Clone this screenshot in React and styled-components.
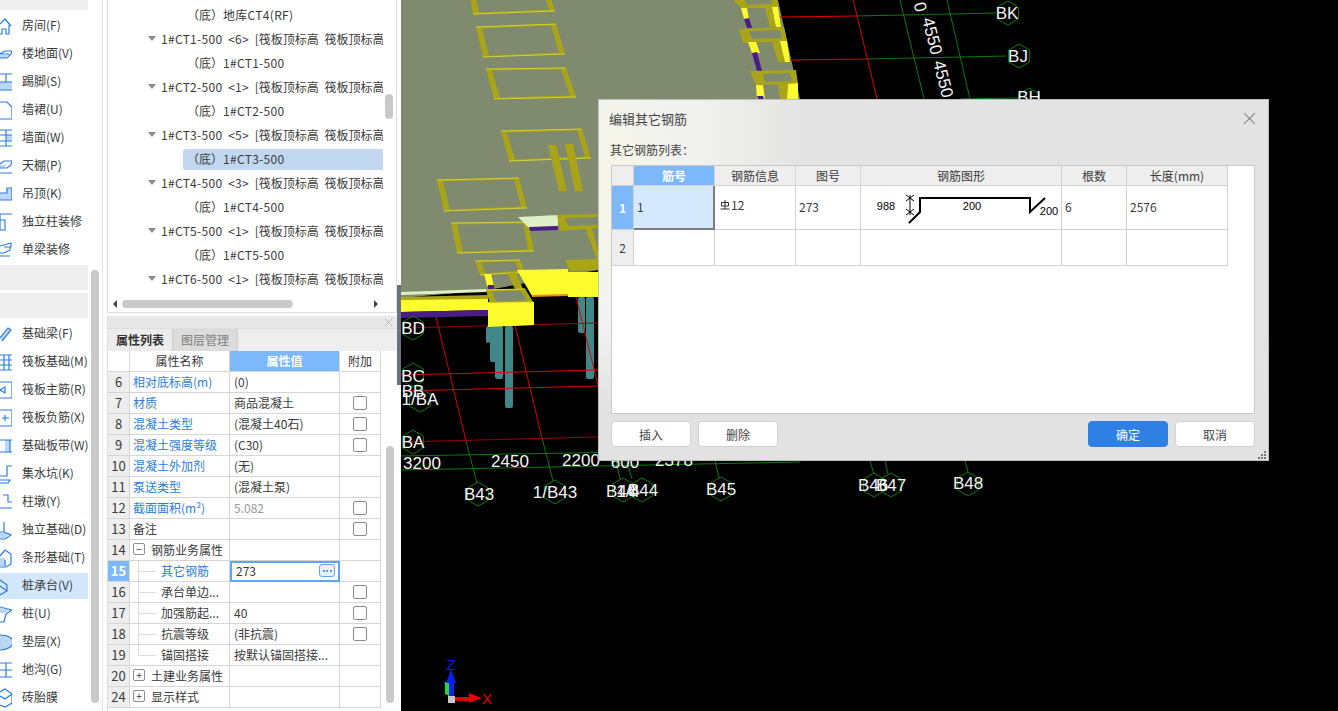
import React from "react";
import styled, { createGlobalStyle } from "styled-components";

const Global = createGlobalStyle`
  html, body { margin: 0; padding: 0; background: #fff; overflow: hidden; }
  * { box-sizing: border-box; }
  body { font-family: "Noto Sans CJK SC", "Noto Sans", sans-serif; font-size: 12px; color: #3a3a3a; }
`;

const Page = styled.div`
  position: relative;
  display: flex;
  width: 1338px;
  height: 711px;
  overflow: hidden;
  background: #fff;
`;

/* ---------- left nav ---------- */
const Sidebar = styled.aside`
  display: flex;
  width: 107px;
  flex-shrink: 0;
`;
const NavList = styled.div`
  display: flex;
  flex-direction: column;
  width: 88px;
`;
const NavBlock = styled.div`
  height: ${(p) => p.$h}px;
  margin-top: ${(p) => p.$mt}px;
  margin-bottom: ${(p) => p.$mb || 0}px;
  background: #eeeeee;
  flex-shrink: 0;
`;
const NavItem = styled.div`
  display: flex;
  align-items: center;
  flex-shrink: 0;
  height: 26px;
  margin: 1px 0;
  padding-bottom: 3px;
  background: ${(p) => (p.$active ? "#d2e6fc" : "transparent")};
  white-space: nowrap;
  overflow: hidden;
  svg { margin: 3px 10px 0 -8px; flex-shrink: 0; }
`;
const NavTrack = styled.div`
  width: 8px;
  margin: 270px 0 8px 3px;
  border-radius: 4px;
  background: #c9c9c9;
`;
const NavRule = styled.div`
  width: 1px;
  margin-left: 3px;
  background: #e4e4e4;
`;

/* ---------- middle panels ---------- */
const Column = styled.section`
  display: flex;
  flex-direction: column;
  width: 290px;
  flex-shrink: 0;
`;
const TreePanel = styled.div`
  display: flex;
  flex-direction: column;
  height: 313px;
  flex-shrink: 0;
  border: 1px solid #dcdcdc;
  border-top: 0;
`;
const TreeBody = styled.div`
  display: flex;
  flex: 1;
  min-height: 0;
`;
const TreeList = styled.div`
  width: 275px;
  padding-top: 3px;
  overflow: hidden;
`;
const TreeRow = styled.div`
  display: flex;
  align-items: center;
  height: 24px;
  padding-bottom: 1px;
  white-space: nowrap;
  padding-left: ${(p) => (p.$child ? 79 : 40)}px;
  position: relative;
  word-spacing: 3px;
  &::before {
    content: "";
    display: ${(p) => (p.$child ? "none" : "block")};
    width: 0;
    height: 0;
    margin-right: 5px;
    flex-shrink: 0;
    border-left: 4px solid transparent;
    border-right: 4px solid transparent;
    border-top: 5px solid #8a8a8a;
  }
  ${(p) =>
    p.$selected &&
    `
    &::after {
      content: "";
      position: absolute;
      left: 75px;
      right: 0;
      top: 2px;
      bottom: 1px;
      background: #c1d8f0;
      border-radius: 3px 0 0 3px;
      z-index: 0;
    }
    > span { position: relative; z-index: 1; }
  `}
`;
const Code = styled.span`
  letter-spacing: 0.3px;
`;
const VTrack = styled.div`
  width: 8px;
  margin-left: ${(p) => p.$ml}px;
  padding-top: ${(p) => p.$top}px;
`;
const VThumb = styled.div`
  height: ${(p) => p.$h}px;
  border-radius: 4px;
  background: #c9c9c9;
`;
const HBar = styled.div`
  display: flex;
  align-items: center;
  gap: 4px;
  height: 16px;
  padding-left: 5px;
`;
const HThumb = styled.div`
  width: 171px;
  height: 8px;
  margin-left: 1px;
  border-radius: 4px;
  background: #c9c9c9;
`;
const ArrowL = styled.div`
  border-top: 4px solid transparent;
  border-bottom: 4px solid transparent;
  border-right: 4px solid #444;
`;
const ArrowR = styled.div`
  margin-left: 77px;
  border-top: 4px solid transparent;
  border-bottom: 4px solid transparent;
  border-left: 4px solid #444;
`;

const PropPanel = styled.div`
  display: flex;
  flex-direction: column;
  flex: 1;
  min-height: 0;
  margin-top: 3px;
  border-left: 1px solid #dcdcdc;
`;
const PanelHead = styled.div`
  display: flex;
  justify-content: flex-end;
  align-items: center;
  height: 12px;
  padding-right: 4px;
  background: #e8e8e8;
`;
const TabBar = styled.div`
  display: flex;
  height: 23px;
  background: #eeeeee;
  border-top: 1px solid #dedede;
`;
const Tab = styled.div`
  display: flex;
  align-items: center;
  justify-content: center;
  width: 65px;
  padding-bottom: 2px;
  background: ${(p) => (p.$active ? "#ececec" : "#dcdcdc")};
  color: ${(p) => (p.$active ? "#333" : "#8d8d8d")};
  font-weight: ${(p) => (p.$active ? 700 : 500)};
  border-right: 1px solid #cfcfcf;
`;
const PropBody = styled.div`
  display: flex;
  flex: 1;
  min-height: 0;
`;
const PropTable = styled.div`
  width: 274px;
`;
const PropRow = styled.div`
  display: grid;
  grid-template-columns: 22px 100px 110px 41px;
  height: 21px;
`;
const Cell = styled.div`
  position: relative;
  display: flex;
  align-items: center;
  min-width: 0;
  padding-bottom: 2px;
  white-space: nowrap;
  overflow: hidden;
  border-right: 1px solid #d6d6d6;
  border-bottom: 1px solid #d6d6d6;
`;
const IndexCell = styled(Cell)`
  justify-content: center;
  background: ${(p) => (p.$active ? "#7db8fa" : "#eeeeee")};
  color: ${(p) => (p.$active ? "#fff" : "#3a3a3a")};
  font-size: 13px;
  font-weight: ${(p) => (p.$active ? 700 : 400)};
`;
const HeadCell = styled(Cell)`
  justify-content: center;
  background: ${(p) => (p.$active ? "#7db8fa" : "#fff")};
  color: ${(p) => (p.$active ? "#fff" : "#3a3a3a")};
  font-weight: ${(p) => (p.$active ? 700 : 400)};
`;
const NameCell = styled(Cell)`
  padding-left: ${(p) => (p.$tree ? 31 : 3)}px;
  color: ${(p) => (p.$link ? "#2a7de1" : "#3a3a3a")};
  ${(p) =>
    p.$tree &&
    `
    &::before {
      content: "";
      position: absolute;
      left: 8px;
      top: 0;
      width: 17px;
      height: 50%;
      border-left: 1px solid #ddd;
      border-bottom: 1px solid #ddd;
    }
  `}
  ${(p) =>
    p.$tree &&
    !p.$last &&
    `
    &::after {
      content: "";
      position: absolute;
      left: 8px;
      top: 50%;
      bottom: -1px;
      border-left: 1px solid #ddd;
    }
  `}
`;
const ValueCell = styled(Cell)`
  padding-left: 4px;
  color: ${(p) => (p.$muted ? "#9a9a9a" : "#3a3a3a")};
`;
const EditCell = styled(Cell)`
  justify-content: space-between;
  padding: 0 3px 2px 4px;
  border: 2px solid #5ba6f5;
`;
const DotsButton = styled.div`
  display: flex;
  align-items: center;
  justify-content: center;
  gap: 1.5px;
  width: 16px;
  height: 13px;
  border: 1px solid #5ba6f5;
  border-radius: 3px;
  background: #e6f1fd;
  i { width: 2px; height: 2px; border-radius: 50%; background: #2a7de1; }
`;
const CheckCell = styled(Cell)`
  justify-content: center;
  padding-bottom: 0;
`;
const Check = styled.div`
  width: 14px;
  height: 14px;
  border: 1px solid #8a8a8a;
  border-radius: 2px;
  background: #fff;
`;
const Expand = styled.div`
  display: flex;
  align-items: center;
  justify-content: center;
  width: 12px;
  height: 12px;
  margin-right: 6px;
  flex-shrink: 0;
  border: 1px solid #8e8e8e;
  border-radius: 2px;
  font-size: 10px;
  line-height: 1;
`;

const Splitter = styled.div`
  width: 4px;
  flex-shrink: 0;
  padding-top: 285px;
`;
const SplitHandle = styled.div`
  height: 100px;
  background: #6b7180;
`;

/* ---------- 3D view ---------- */
const Viewport = styled.main`
  flex: 1;
  background: #000;
  svg { display: block; }
`;

/* ---------- dialog ---------- */
const Dialog = styled.div`
  position: absolute;
  left: 598px;
  top: 99px;
  width: 671px;
  height: 362px;
  display: flex;
  flex-direction: column;
  padding: 0 13px 13px 12px;
  border: 1px solid #bdbdbd;
  background:
    linear-gradient(180deg, rgba(226,226,226,0) 62%, #e2e2e2 85%),
    radial-gradient(ellipse 60px 130px at 20px 90px, #f5f6e6 0%, rgba(245,246,230,0) 100%),
    linear-gradient(90deg, #f3f3f1 0%, #f0f0ee 16%, #e4e4e4 30%, #e3e3e3 100%);
`;
const DialogHead = styled.div`
  display: flex;
  align-items: center;
  justify-content: space-between;
  height: 38px;
  padding-bottom: 2px;
  margin-left: -2px;
  font-size: 13px;
  color: #444;
  svg { margin-right: -1px; }
`;
const DialogLabel = styled.div`
  height: 27px;
  padding-top: 3px;
  margin-left: -1px;
  color: #444;
`;
const GridBox = styled.div`
  flex: 1;
  min-height: 0;
  background: #fff;
  border: 1px solid #c8c8c8;
`;
const RebarRow = styled.div`
  display: grid;
  grid-template-columns: 22px 81px 81px 65px 201px 65px 101px;
  width: 616px;
  height: ${(p) => p.$h}px;
`;
const RCell = styled(Cell)`
  padding-left: 3px;
  border-color: #d2d2d2;
`;
const RHead = styled(Cell)`
  justify-content: center;
  padding-bottom: 0;
  border-color: #d2d2d2;
  background: ${(p) => (p.$active ? "#7db8fa" : "#eeeeee")};
  color: ${(p) => (p.$active ? "#fff" : "#3a3a3a")};
  font-weight: ${(p) => (p.$active ? 700 : 400)};
`;
const RSelected = styled(RCell)`
  background: #d5e9fd;
  border-right: 2px solid #7c7c7c;
  border-bottom: 2px solid #7c7c7c;
`;
const RFigure = styled(Cell)`
  padding: 0;
  border-color: #d2d2d2;
  svg { display: block; }
`;
const RInfo = styled(RCell)`
  gap: 1px;
  padding-left: 5px;
  svg { margin-top: -4px; }
  span { margin-top: -4px; }
`;
const Footer = styled.div`
  display: flex;
  align-items: center;
  gap: 7px;
  height: 26px;
  margin-top: 7px;
  flex-shrink: 0;
`;
const Btn = styled.div`
  display: flex;
  align-items: center;
  justify-content: center;
  width: 80px;
  height: 26px;
  border-radius: 4px;
  border: 1px solid ${(p) => (p.$primary ? "#2f80e4" : "#d2d2d2")};
  background: ${(p) => (p.$primary ? "#2f80e4" : "#fff")};
  color: ${(p) => (p.$primary ? "#fff" : "#444")};
`;
const Spacer = styled.div`
  flex: 1;
`;
const Grip = styled.svg`
  position: absolute;
  right: 0;
  bottom: 0;
`;

/* ---------- data ---------- */
const BLUE = "#2a7de1";
const LIGHT = "#bcd6f5";
const Ic = ({ d, fill }) => (
  <svg width="20" height="20" viewBox="0 0 20 20" fill="none" stroke={BLUE} strokeWidth="1.2">
    {fill && <path d={fill} fill={LIGHT} stroke="none" />}
    <path d={d} />
  </svg>
);
const icons = {
  house: { d: "M8 8L13 3l6 7M17 9v9h-3v-5h-4v5H8" },
  floor: { d: "M8 10l5-3h7l-1 3-4 4H8M8 10h9", fill: "M8 11h8l-3 3H8z" },
  skirt: { d: "M8 2h13v16H8M8 10h13M14 2v8", fill: "M8 10h13v8H8z" },
  apron: { d: "M8 2h7l5 5v12H8" },
  wall: { d: "M8 2h13v16H8M8 7h13M8 13h13M14 2v16", fill: "M14 7h7v6h-7z" },
  ceil: { d: "M8 8l4-3h8l-1 4-4 3H8M8 17h13", fill: "M8 9h7l-3 3H8z" },
  drop: { d: "M8 16h12V4h-5v5H8", fill: "M8 9h7V4h5v12H8z" },
  col: { d: "M8 2h13M8 2v16h5V8h-5M8 8h4" },
  beam: { d: "M8 6l11-3v4H12M12 7l6 0v3l-6 3H8M8 16h10" },
  fbeam: { d: "M8 14l8-10 3 2-9 11", fill: "M8 14l8-10 3 2-9 11z" },
  raft: { d: "M8 3h13v15H8M8 8h13M8 13h13M12 3v15M17 3v15" },
  rmain: { d: "M8 2h12v16H8M8 10l5-3v6z" },
  rneg: { d: "M8 2h12v16H8M10 10h7M13 7v6" },
  band: { d: "M8 4h13M8 16h13M18 4v12", fill: "M13 4h5v12h-5z" },
  pit: { d: "M15 2h5M15 2v10H8M8 16h10l-2 3H8" },
  pier: { d: "M11 3h5v7h5v6H8" },
  isof: { d: "M12 2v10H8M12 12l7 3-6 4H8", fill: "M8 13h10l-5 5H8z" },
  strip: { d: "M13 2l6 4v10l-5 3H8M13 2L8 8M13 12v6", fill: "M8 10h5v8H8z" },
  cap: { d: "M8 4l7 5v6l-7 4M8 10l7 5" },
  pile: { d: "M8 3l12 3-6 4-2 8H8", fill: "M8 4l11 2-6 3H8z" },
  mat: { d: "M8 3c8 0 13 3 13 7s-5 8-13 8", fill: "M8 3c8 0 13 3 13 7s-5 8-13 8z" },
  ditch: { d: "M8 3h13v14H8M8 10h13M14 3v14" },
  tire: { d: "M8 4l5-3 7 5v9l-7 4-5-2M8 8l5 3 7-5" },
};

const nav1 = [
  ["房间(F)", "house"], ["楼地面(V)", "floor"], ["踢脚(S)", "skirt"], ["墙裙(U)", "apron"],
  ["墙面(W)", "wall"], ["天棚(P)", "ceil"], ["吊顶(K)", "drop"], ["独立柱装修", "col"], ["单梁装修", "beam"],
];
const nav2 = [
  ["基础梁(F)", "fbeam"], ["筏板基础(M)", "raft"], ["筏板主筋(R)", "rmain"], ["筏板负筋(X)", "rneg"],
  ["基础板带(W)", "band"], ["集水坑(K)", "pit"], ["柱墩(Y)", "pier"], ["独立基础(D)", "isof"],
  ["条形基础(T)", "strip"], ["桩承台(V)", "cap", true], ["桩(U)", "pile"], ["垫层(X)", "mat"],
  ["地沟(G)", "ditch"], ["砖胎膜", "tire"],
];

const ROOF = "[筏板顶标高 筏板顶标高";
const tree = [
  { c: 1, t: "（底）", code: "地库CT4(RF)" },
  { code: "1#CT1-500", qty: "<6>" }, { c: 1, t: "（底）", code: "1#CT1-500" },
  { code: "1#CT2-500", qty: "<1>" }, { c: 1, t: "（底）", code: "1#CT2-500" },
  { code: "1#CT3-500", qty: "<5>" }, { c: 1, s: 1, t: "（底）", code: "1#CT3-500" },
  { code: "1#CT4-500", qty: "<3>" }, { c: 1, t: "（底）", code: "1#CT4-500" },
  { code: "1#CT5-500", qty: "<1>" }, { c: 1, t: "（底）", code: "1#CT5-500" },
  { code: "1#CT6-500", qty: "<1>" },
];

const props = [
  { n: 6, name: "相对底标高(m)", link: 1, v: "(0)" },
  { n: 7, name: "材质", link: 1, v: "商品混凝土", ck: 1 },
  { n: 8, name: "混凝土类型", link: 1, v: "(混凝土40石)", ck: 1 },
  { n: 9, name: "混凝土强度等级", link: 1, v: "(C30)", ck: 1 },
  { n: 10, name: "混凝土外加剂", link: 1, v: "(无)" },
  { n: 11, name: "泵送类型", link: 1, v: "(混凝土泵)" },
  { n: 12, name: "截面面积(m²)", link: 1, v: "5.082", muted: 1, ck: 1 },
  { n: 13, name: "备注", v: "", ck: 1 },
  { n: 14, name: "钢筋业务属性", group: "−" },
  { n: 15, name: "其它钢筋", link: 1, tree: 1, edit: "273" },
  { n: 16, name: "承台单边...", tree: 1, v: "", ck: 1 },
  { n: 17, name: "加强筋起...", tree: 1, v: "40", ck: 1 },
  { n: 18, name: "抗震等级", tree: 1, v: "(非抗震)", ck: 1 },
  { n: 19, name: "锚固搭接", tree: 1, last: 1, v: "按默认锚固搭接..." },
  { n: 20, name: "土建业务属性", group: "+" },
  { n: 24, name: "显示样式", group: "+" },
];

/* ---------- 3D drawing ---------- */
const SLAB = "#7f8a6e";
const OLIVE = "#aaa518";
const YEL = "#fdfd2e";
const PUR = "#4a1c86";
const TEAL = "#3f8788";
const RED = "#e00000";
const GRN = "#0b7a0b";

const pts = (a) => a.map((p) => p.join(",")).join(" ");
const Frame = ({ q }) => {
  const [a, b, c, d] = q;
  const inner = [
    [a[0] + 6, a[1] + 1.5],
    [b[0] - 5, b[1] + 1.5],
    [c[0] - 6, c[1] - 1.5],
    [d[0] + 6, d[1] - 1.5],
  ];
  return (
    <g>
      <polygon points={pts(q)} fill={OLIVE} />
      <polygon points={pts(inner)} fill={SLAB} />
      <line x1={a[0]} y1={a[1]} x2={b[0]} y2={b[1]} stroke="#e6e322" strokeWidth="0.8" />
      <line x1={d[0]} y1={d[1]} x2={c[0]} y2={c[1]} stroke="#e6e322" strokeWidth="0.8" />
    </g>
  );
};
const frames = [
  [[470, -4], [550, -4], [555, 11], [473, 14]],
  [[476, 27], [556, 24], [565, 54], [483, 57]],
  [[486, 69], [566, 68], [576, 97], [494, 99]],
  [[501, 131], [582, 129], [591, 158], [509, 161]],
  [[437, 180], [519, 178], [527, 208], [444, 211]],
  [[451, 223], [528, 222], [534, 251], [457, 253]],
  [[475, 261], [520, 260], [525, 272], [480, 275]],
  [[486, 290], [525, 289], [533, 302], [490, 303]],
];
const polys = [
  [OLIVE, [[733, 0], [777, 0], [779, 8], [741, 8]]],
  [SLAB, [[745, 0], [771, 0], [772, 4], [747, 5]]],
  [OLIVE, [[765, 8], [772, 8], [776, 27], [770, 27]]],
  [YEL, [[772, 7], [778, 7], [781, 27], [776, 27]]],
  [YEL, [[741, 8], [747, 8], [749, 19], [744, 19]]],
  [PUR, [[744, 19], [749, 18], [752, 28], [747, 28]]],
  [OLIVE, [[739, 29], [784, 27], [787, 41], [743, 43]]],
  [SLAB, [[749, 31], [780, 30], [782, 38], [752, 39]]],
  [OLIVE, [[772, 42], [780, 41], [785, 62], [778, 62]]],
  [YEL, [[780, 41], [787, 41], [790, 62], [785, 62]]],
  [YEL, [[748, 42], [756, 42], [760, 53], [752, 53]]],
  [PUR, [[752, 53], [757, 52], [762, 71], [757, 71]]],
  [OLIVE, [[750, 71], [796, 70], [798, 84], [756, 85]]],
  [SLAB, [[763, 74], [790, 73], [792, 81], [765, 82]]],
  [YEL, [[756, 85], [763, 85], [765, 99], [757, 99]]],
  [PUR, [[757, 96], [763, 96], [764, 99], [758, 99]]],
  [OLIVE, [[778, 84], [788, 84], [787, 99], [780, 99]]],
  [YEL, [[788, 84], [798, 83], [798, 99], [787, 99]]],
  [OLIVE, [[548, 145], [556, 145], [567, 191], [559, 191]]],
  [OLIVE, [[565, 144], [573, 144], [583, 191], [575, 191]]],
  ["#dff0c8", [[518, 217], [558, 215], [558, 226], [529, 228]]],
  [PUR, [[529, 227], [558, 226], [558, 230], [530, 231]]],
  [OLIVE, [[557, 215], [598, 214], [598, 217], [565, 218], [568, 226], [598, 225], [598, 228], [560, 231]]],
  [OLIVE, [[585, 228], [592, 228], [598, 250], [598, 262]]],
  [OLIVE, [[565, 260], [598, 259], [598, 270], [570, 271]]],
  [YEL, [[484, 274], [491, 274], [494, 286], [487, 286]]],
  [PUR, [[488, 285], [494, 285], [494, 289], [488, 289]]],
  [YEL, [[517, 270], [568, 269], [568, 295], [532, 296]]],
  ["#f58a12", [[532, 295], [568, 294], [568, 296], [532, 297]]],
  [YEL, [[568, 272], [598, 272], [598, 297], [568, 297]]],
  [OLIVE, [[507, 273], [516, 272], [523, 289], [515, 289]]],
  ["#dff0c8", [[401, 292], [486, 289], [486, 292], [401, 295]]],
  [OLIVE, [[401, 297], [488, 295], [488, 300], [401, 301]]],
  [YEL, [[401, 300], [488, 299], [488, 310], [401, 312]]],
  [PUR, [[401, 312], [488, 310], [488, 316], [401, 318]]],
  [YEL, [[488, 302], [534, 302], [534, 325], [488, 327]]],
];

const pillars = [
  [486, 326, 4, 17], [490, 326, 7, 36], [495, 326, 8, 53], [505, 326, 8, 82],
  [578, 297, 7, 36], [586, 297, 8, 82],
];
const redLines = [
  [780, 17, 857, 16], [788, 60, 867, 59], [853, -1, 877, 99],
  [436, 317, 466, 441], [515, 325, 542, 438], [576, 297, 598, 385],
  [401, 375, 598, 370], [401, 391, 598, 386],
];
const darkRed = [[401, 328, 598, 323], [401, 442, 598, 437]];
const greenLines = [
  [857, 16, 996, 13], [867, 59, 1006, 56], [900, 0, 924, 99], [947, 0, 970, 99], [960, 99, 1018, 98],
  [401, 456, 800, 449], [401, 470, 800, 462], [466, 441, 477, 483], [542, 438, 553, 481],
  [616, 461, 620, 479], [627, 461, 632, 479], [715, 461, 719, 478], [870, 461, 874, 474],
  [885, 461, 888, 474], [965, 461, 968, 472],
];
const hex = (x, y, r = 12) =>
  [0, 1, 2, 3, 4, 5]
    .map((i) => {
      const a = (Math.PI / 3) * i - Math.PI / 2;
      return `${x + r * Math.cos(a)},${y + r * Math.sin(a)}`;
    })
    .join(" ");
const hexes = [
  [1008, 13], [1019, 56], [1029, 100], [413, 328], [413, 375], [420, 400], [413, 442],
  [478, 494], [555, 492], [623, 490], [642, 490], [721, 489], [874, 485], [891, 485], [968, 484],
];
const labels = [
  ["BK", 1007, 13], ["BJ", 1018, 56], ["BH", 1029, 97], ["BD", 413, 328], ["BC", 413, 376],
  ["BB", 413, 391], ["1/BA", 420, 399], ["BA", 413, 442], ["3200", 422, 463], ["2450", 510, 461],
  ["2200", 581, 460], ["B43", 479, 494], ["1/B43", 555, 492], ["B44", 621, 491], ["1/4", 628, 491],
  ["B44", 643, 490], ["B45", 721, 489], ["B46", 873, 485], ["B47", 891, 485], ["B48", 968, 483],
  ["600", 625, 462], ["2378", 674, 460],
];
const rotLabels = [["0", 920, 7], ["4550", 932, 36], ["4550", 943, 79]];
const Lab = styled.text`
  font-family: "Liberation Sans", sans-serif;
  font-size: 17px;
  fill: #f4f4f4;
  text-anchor: middle;
  dominant-baseline: central;
`;
const AxisLabel = styled.text`
  font-family: "Liberation Sans", sans-serif;
  font-size: 15px;
  text-anchor: middle;
  dominant-baseline: central;
`;

const Scene = () => (
  <svg width="937" height="711" viewBox="401 0 937 711">
    <polygon points="401,0 733,0 778,0 800,99 800,260 598,270 488,290 401,298" fill={SLAB} />
    {pillars.map(([x, y, w, h], i) => (
      <rect key={i} x={x} y={y} width={w} height={h} rx="2" fill={TEAL} />
    ))}
    {redLines.map(([a, b, c, d], i) => (
      <line key={i} x1={a} y1={b} x2={c} y2={d} stroke={RED} strokeWidth="1" />
    ))}
    {darkRed.map(([a, b, c, d], i) => (
      <line key={i} x1={a} y1={b} x2={c} y2={d} stroke="#9a0000" strokeWidth="1" />
    ))}
    {greenLines.map(([a, b, c, d], i) => (
      <line key={i} x1={a} y1={b} x2={c} y2={d} stroke={GRN} strokeWidth="1" />
    ))}
    {frames.map((q, i) => (
      <Frame key={i} q={q} />
    ))}
    {polys.map(([f, p], i) => (
      <polygon key={i} points={pts(p)} fill={f} />
    ))}
    <Frame q={frames[7]} />
    {hexes.map(([x, y], i) => (
      <polygon key={i} points={hex(x, y)} fill="none" stroke={GRN} strokeWidth="1" />
    ))}
    {labels.map(([t, x, y], i) => (
      <Lab key={i} x={x} y={y}>
        {t}
      </Lab>
    ))}
    {rotLabels.map(([t, x, y], i) => (
      <Lab key={i} x={x} y={y} transform={`rotate(76 ${x} ${y})`}>
        {t}
      </Lab>
    ))}
    <g>
      <polygon points="445,682 449,682 450,696 445,694" fill="#22e022" />
      <line x1="445" y1="682" x2="449" y2="696" stroke="#22e022" strokeWidth="1" />
      <rect x="449" y="680" width="5" height="17" fill="#0a1ef0" />
      <polygon points="451,669 446,683 456,683" fill="#0a1ef0" />
      <rect x="448" y="696" width="7" height="7" fill="#c8c8c8" />
      <rect x="455" y="697" width="15" height="4" fill="#e80000" />
      <polygon points="469,693 482,698 469,703" fill="#e80000" />
      <AxisLabel x="451" y="664" fill="#0a1ef0">Z</AxisLabel>
      <AxisLabel x="487" y="698" fill="#e80000">X</AxisLabel>
    </g>
  </svg>
);

const Figure = () => (
  <svg width="200" height="43" viewBox="861 186 200 43">
    <g stroke="#000" strokeWidth="2" fill="none">
      <polyline points="909,223 920,212 920,198 1030,198 1030,212 1045,198" />
    </g>
    <g stroke="#000" strokeWidth="1" fill="none">
      <line x1="910" y1="195" x2="910" y2="215" />
      <line x1="906" y1="195" x2="914" y2="201" />
      <line x1="914" y1="195" x2="906" y2="201" />
      <line x1="906" y1="215" x2="914" y2="209" />
      <line x1="914" y1="215" x2="906" y2="209" />
    </g>
    <g fontFamily="Liberation Sans, sans-serif" fontSize="11" fill="#000" textAnchor="middle">
      <text x="886" y="210">988</text>
      <text x="972" y="210">200</text>
      <text x="1049" y="215">200</text>
    </g>
  </svg>
);

const RebarGlyph = () => (
  <svg width="10" height="10" viewBox="0 0 10 10" fill="none" stroke="#333" strokeWidth="1">
    <path d="M1.5 2.5h7v3.5h-7zM5 0v9M0.5 9h9" />
  </svg>
);

const Close = ({ size, color, width = 1 }) => (
  <svg width={size} height={size} viewBox="0 0 12 12" stroke={color} strokeWidth={width} fill="none">
    <path d="M1 1l10 10M11 1L1 11" />
  </svg>
);

const PropLine = ({ r }) => (
  <PropRow>
    <IndexCell $active={!!r.edit}>{r.n}</IndexCell>
    {r.group ? (
      <NameCell>
        <Expand>{r.group}</Expand>
        {r.name}
      </NameCell>
    ) : (
      <NameCell $link={r.link} $tree={r.tree} $last={r.last}>
        {r.name}
      </NameCell>
    )}
    {r.edit ? (
      <EditCell>
        {r.edit}
        <DotsButton>
          <i />
          <i />
          <i />
        </DotsButton>
      </EditCell>
    ) : (
      <ValueCell $muted={r.muted}>{r.v}</ValueCell>
    )}
    <CheckCell>{r.ck ? <Check /> : null}</CheckCell>
  </PropRow>
);

export default function App() {
  return (
    <Page>
      <Global />
      <Sidebar>
        <NavList>
          <NavBlock $h={10} $mt={0} $mb={2} />
          {nav1.map(([t, k]) => (
            <NavItem key={t}>
              <Ic {...icons[k]} />
              {t}
            </NavItem>
          ))}
          <NavBlock $h={25} $mt={1} />
          <NavBlock $h={25} $mt={3} $mb={2} />
          {nav2.map(([t, k, a]) => (
            <NavItem key={t} $active={a}>
              <Ic {...icons[k]} />
              {t}
            </NavItem>
          ))}
        </NavList>
        <NavTrack />
        <NavRule />
      </Sidebar>

      <Column>
        <TreePanel>
          <TreeBody>
            <TreeList>
              {tree.map((r, i) => (
                <TreeRow key={i} $child={r.c} $selected={r.s}>
                  <span>
                    {r.t}
                    <Code>{r.code}</Code>
                    {r.qty ? (
                      <>
                        {" "}
                        <Code>{r.qty}</Code> {ROOF}
                      </>
                    ) : null}
                  </span>
                </TreeRow>
              ))}
            </TreeList>
            <VTrack $ml={2} $top={94}>
              <VThumb $h={25} />
            </VTrack>
          </TreeBody>
          <HBar>
            <ArrowL />
            <HThumb />
            <ArrowR />
          </HBar>
        </TreePanel>

        <PropPanel>
          <PanelHead>
            <Close size={9} color="#aaa" />
          </PanelHead>
          <TabBar>
            <Tab $active>属性列表</Tab>
            <Tab>图层管理</Tab>
          </TabBar>
          <PropBody>
            <PropTable>
              <PropRow>
                <HeadCell />
                <HeadCell>属性名称</HeadCell>
                <HeadCell $active>属性值</HeadCell>
                <HeadCell>附加</HeadCell>
              </PropRow>
              {props.map((r) => (
                <PropLine key={r.n} r={r} />
              ))}
            </PropTable>
            <VTrack $ml={4} $top={95}>
              <VThumb $h={257} />
            </VTrack>
          </PropBody>
        </PropPanel>
      </Column>

      <Splitter>
        <SplitHandle />
      </Splitter>

      <Viewport>
        <Scene />
      </Viewport>

      <Dialog>
        <DialogHead>
          编辑其它钢筋
          <Close size={13} color="#8a8a8a" width={1.1} />
        </DialogHead>
        <DialogLabel>其它钢筋列表：</DialogLabel>
        <GridBox>
          <RebarRow $h={20}>
            <RHead />
            <RHead $active>筋号</RHead>
            <RHead>钢筋信息</RHead>
            <RHead>图号</RHead>
            <RHead>钢筋图形</RHead>
            <RHead>根数</RHead>
            <RHead>长度(mm)</RHead>
          </RebarRow>
          <RebarRow $h={44}>
            <RHead $active>1</RHead>
            <RSelected>1</RSelected>
            <RInfo>
              <RebarGlyph />
              <span>12</span>
            </RInfo>
            <RCell>273</RCell>
            <RFigure>
              <Figure />
            </RFigure>
            <RCell>6</RCell>
            <RCell>2576</RCell>
          </RebarRow>
          <RebarRow $h={36}>
            <RHead>2</RHead>
            <RCell />
            <RCell />
            <RCell />
            <RCell />
            <RCell />
            <RCell />
          </RebarRow>
        </GridBox>
        <Footer>
          <Btn>插入</Btn>
          <Btn>删除</Btn>
          <Spacer />
          <Btn $primary>确定</Btn>
          <Btn>取消</Btn>
        </Footer>
        <Grip width="10" height="10" viewBox="0 0 10 10" fill="#777">
          <rect x="6" y="1" width="2" height="2" />
          <rect x="3" y="4" width="2" height="2" />
          <rect x="6" y="4" width="2" height="2" />
          <rect x="0" y="7" width="2" height="2" />
          <rect x="3" y="7" width="2" height="2" />
          <rect x="6" y="7" width="2" height="2" />
        </Grip>
      </Dialog>
    </Page>
  );
}
